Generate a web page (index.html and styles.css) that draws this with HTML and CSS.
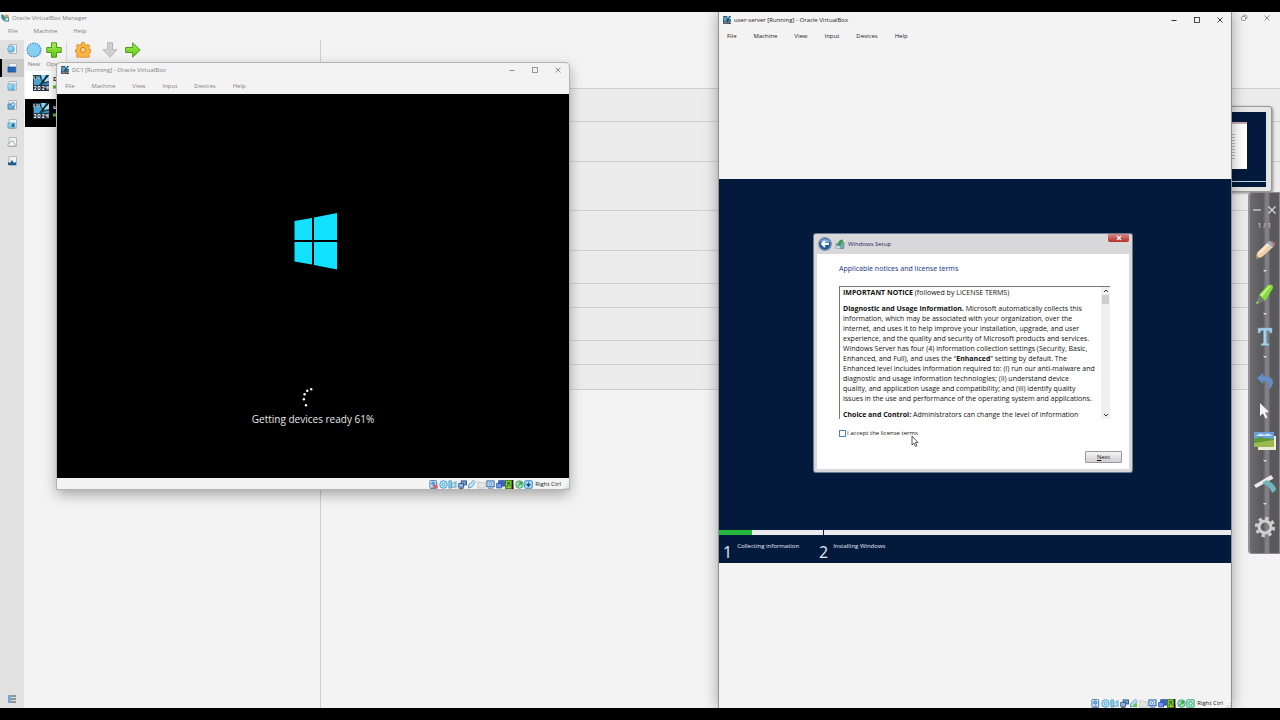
FILE: index.html
```html
<!DOCTYPE html>
<html lang="en">
<head>
<meta charset="utf-8">
<title>Oracle VirtualBox Manager</title>
<link rel="stylesheet" href="styles.css">
</head>
<body>
<svg class="defs" aria-hidden="true">
  <defs>
    <linearGradient id="blue" x1="0" y1="0" x2="1" y2="1"><stop offset="0" stop-color="#c8efff"/><stop offset="1" stop-color="#4aaee6"/></linearGradient>
    <linearGradient id="green" x1="0" y1="0" x2="0" y2="1"><stop offset="0" stop-color="#a6f04a"/><stop offset="1" stop-color="#5cc416"/></linearGradient>
    <symbol id="server" viewBox="0 0 16 16">
      <rect width="16" height="16" fill="#1d3d50"/><path d="M1 4l6-1 2 3-3 4H1z" fill="#4ba3cf"/><path d="M8 0h5l-2 4-2 1z" fill="#8fd3f2"/><path d="M14 1h2v5l-5 1z" fill="#b9e2f2"/><path d="M10 9l6-2v3H9z" fill="#3c8cc0"/>
      <path d="M1 1v3h1M4 1v3M6 1v3" stroke="#e8f2f6" fill="none" stroke-width=".9"/><path d="M9 7l6-6" stroke="#122632" stroke-width="1.200"/><path d="M0 11h16v5H0z" fill="#2a333e"/>
      <path d="M1 11.500h2v1.500l-2 1.500h2.300M5 11.500h2v3H5zM9 11.500h2v1.500l-2 1.500h2.300M13 11v2h2v-2 4" stroke="#dfe8f4" fill="none" stroke-width=".9"/>
    </symbol>
    <symbol id="s-disk" viewBox="0 0 10 10"><rect x="1" y=".5" width="7.500" height="9" rx="1" fill="#d9efff" stroke="#3d6fa8"/><circle cx="4.800" cy="4" r="2" fill="#5caee8" stroke="#2f64a8" stroke-width=".6"/><path d="M2.500 8h5" stroke="#4b7cb4"/></symbol>
    <symbol id="s-cd" viewBox="0 0 10 10"><circle cx="5" cy="5" r="4.200" fill="#aee3f8" stroke="#3d98c8"/><circle cx="5" cy="5" r="1.300" fill="#fff" stroke="#2a6fa8" stroke-width=".7"/></symbol>
    <symbol id="s-audio" viewBox="0 0 10 10"><path d="M1 1h3v8H1z" fill="#8fd0ec" stroke="#3f8cb4" stroke-width=".8"/><path d="M4 5l4-3v6H4z" fill="#c6e9f8" stroke="#3f8cb4" stroke-width=".8"/><path d="M9 1v8" stroke="#6fb6d4"/></symbol>
    <symbol id="s-net" viewBox="0 0 10 10"><rect x="3.500" y="1" width="6" height="4.500" fill="#6d9fd6" stroke="#2c4678" stroke-width=".9"/><rect x=".8" y="4" width="5.500" height="4" fill="#90c0ee" stroke="#2c4678" stroke-width=".9"/><path d="M1 9.500h5" stroke="#555"/></symbol>
    <symbol id="s-usb" viewBox="0 0 10 10"><path d="M1.500 9l.5-4 4-3.500 2.500 2.500L5 8z" fill="#bce6fa" stroke="#4a90b8" stroke-width=".9"/><path d="M6 1l2-.5 1 1-.5 2" fill="#fff" stroke="#5580a0" stroke-width=".7"/></symbol>
    <symbol id="s-share" viewBox="0 0 10 10"><path d="M.8 2h3l1 1h4.500v6H.8z" fill="#e4e4e4" stroke="#bdbdbd" stroke-width=".8"/></symbol>
    <symbol id="s-screen" viewBox="0 0 10 10"><rect x="1" y="1" width="8" height="6.500" fill="#b5dcfa" stroke="#2f5fa0"/><circle cx="5" cy="4.200" r="1.400" fill="#fff" stroke="#3d6fa8" stroke-width=".8"/><path d="M2 9h6" stroke="#4a70a8"/></symbol>
    <symbol id="s-rec" viewBox="0 0 10 10"><rect x="3" y=".8" width="6.500" height="6" fill="#3a65d0" stroke="#203c90" stroke-width=".8"/><rect x=".8" y="4" width="5.500" height="4.800" fill="#6f9bea" stroke="#2a4aa0" stroke-width=".8"/></symbol>
    <symbol id="s-cpu" viewBox="0 0 10 10"><rect x=".5" y=".5" width="7" height="9" fill="#84cf32" stroke="#3c7a14"/><path d="M2 8l2-5 2 4M2 3h4" stroke="#275c10" fill="none"/><path d="M8.500 0v10" stroke="#171717" stroke-width="1.600"/><path d="M9.600 6v4" stroke="#d02020" stroke-width=".7"/></symbol>
    <symbol id="s-mouse" viewBox="0 0 10 10"><circle cx="5" cy="5" r="4.200" fill="#a8e6c0" stroke="#2c9a78"/><path d="M3 7l4-4M4 2.800h3v3" stroke="#3f9f3a" stroke-width="1.200" fill="none"/></symbol>
    <symbol id="s-key" viewBox="0 0 10 10"><rect x=".8" y=".8" width="8.400" height="8.400" rx="1" fill="#a2dcfa" stroke="#3a80b0"/><path d="M5 2v3M2.800 4.800h4.400L5 7.500z" fill="#12407c" stroke="#12407c" stroke-width=".8"/></symbol>
    <symbol id="s-keyg" viewBox="0 0 10 10"><rect x=".8" y=".8" width="8.400" height="8.400" rx="1" fill="#a9ecc9" stroke="#36a486"/><circle cx="5" cy="5" r="2" fill="#e8fff0" stroke="#2a9460"/></symbol>
    <symbol id="min" viewBox="0 0 8 8"><path d="M1.500 4.500h5" stroke="currentColor" stroke-width=".9"/></symbol>
    <symbol id="max" viewBox="0 0 8 8"><rect x="1.500" y="1.500" width="5" height="5" fill="none" stroke="currentColor" stroke-width=".8"/></symbol>
    <symbol id="close" viewBox="0 0 8 8"><path d="M1.500 1.500l5 5m0-5l-5 5" stroke="currentColor" stroke-width=".9"/></symbol>
    <symbol id="restore" viewBox="0 0 8 8"><rect x="1.500" y="2.500" width="4" height="4" rx="1" fill="none" stroke="currentColor" stroke-width=".8"/><path d="M3 1.200h2.500q1.300 0 1.300 1.300V5" fill="none" stroke="currentColor" stroke-width=".8"/></symbol>
    <symbol id="grip" viewBox="0 0 6 6"><path d="M5 1v1M3 3v1M5 3v1M1 5v1M3 5v1M5 5v1" stroke="#b8b8b8"/></symbol>
    <symbol id="page" viewBox="0 0 10 10"><path d="M2 .5h7.500v9H2z" fill="#eef3f6" stroke="#b4b8bc"/></symbol>
  </defs>
</svg>

<main class="manager">
  <header class="titlebar">
    <svg class="logo" viewBox="0 0 9 9"><path d="M.5 1l2.500.5L4 4l-.5 3.500L1 5z" fill="#2c9aa8" stroke="#1d5d70" stroke-width=".6"/><path d="M4.500 4h4v4h-4z" fill="#d7eef2" stroke="#227284" stroke-width=".9"/><path d="M5 1.300h3v2H5z" fill="#f4b878" stroke="#c87830" stroke-width=".7"/></svg>
    <span class="caption">Oracle VirtualBox Manager</span>
    <div class="controls"><button aria-label="Restore"><svg><use href="#restore"/></svg></button><button aria-label="Close"><svg><use href="#close"/></svg></button></div>
  </header>
  <nav class="menu"><button>File</button><button>Machine</button><button>Help</button></nav>
  <div class="workspace">
    <nav class="rail">
      <div class="tools">
        <button aria-label="Welcome"><svg viewBox="0 0 10 10"><use href="#page"/><circle cx="4" cy="5" r="3.300" fill="url(#blue)" stroke="#4b9cc8" stroke-width=".8"/></svg></button>
        <button class="current" aria-label="Machines"><svg viewBox="0 0 10 10"><use href="#page"/><rect x="1" y="4" width="7.500" height="5" fill="#2468b8" stroke="#184c90" stroke-width=".7"/></svg></button>
        <button aria-label="Extensions"><svg viewBox="0 0 10 10"><use href="#page"/><path d="M1 3h6v6H1z" fill="url(#blue)" stroke="#5aa8cc" stroke-width=".8"/><path d="M8 2v7" stroke="#8cc8e0"/></svg></button>
        <button aria-label="Media"><svg viewBox="0 0 10 10"><use href="#page"/><path d="M1 4h6v5H1z" fill="#70b8e4" stroke="#3577a8" stroke-width=".8"/><circle cx="6" cy="4.500" r="2" fill="#b9e3f8" stroke="#3577a8" stroke-width=".7"/></svg></button>
        <button aria-label="Network"><svg viewBox="0 0 10 10"><use href="#page"/><path d="M1 4h7v5H1z" fill="#8cd0e8" stroke="#4aa0bc" stroke-width=".8"/><path d="M4 7l3-3v4z" fill="#17507a"/></svg></button>
        <button aria-label="Cloud"><svg viewBox="0 0 10 10"><use href="#page"/><path d="M1 9V7l2-1 1-2h2l1 2 1 1v2z" fill="#fff" stroke="#8a98a2" stroke-width=".8"/></svg></button>
        <button aria-label="Activities"><svg viewBox="0 0 10 10"><use href="#page"/><path d="M1 9V6l2 1 2-3 2 3 2-1v3z" fill="#1e5a94"/></svg></button>
      </div>
      <button class="log" aria-label="Logs"><svg viewBox="0 0 10 10"><path d="M1 1h3v8H1z" fill="#69aede"/><path d="M4 2h5M4 5h5M4 8h5" stroke="#444" stroke-width="1.200"/></svg></button>
    </nav>
    <section class="machines">
      <div class="toolbar">
        <button class="tool"><svg viewBox="0 0 16 16"><circle cx="8" cy="8" r="6.800" fill="url(#blue)" stroke="#3f94c4" stroke-width="1.500" stroke-dasharray="1.500 1"/><circle cx="8" cy="8" r="6" fill="#86d0f4"/></svg>New</button>
        <button class="tool"><svg viewBox="0 0 16 16"><path d="M5.500.8h5v4.700h4.700v5h-4.700v4.700h-5v-4.700H.8v-5h4.700z" fill="url(#green)" stroke="#4a9a1c"/></svg>Open</button>
        <span class="rule"></span>
        <button class="tool wide"><svg viewBox="0 0 16 16"><path d="M6.600.6h2.800l.4 2 1.500.7 1.800-1.100 1.700 1.700-1.100 1.800.7 1.500 1.400.4v2.800l-1.400.4-.7 1.500 1.100 1.800-1.700 1.700-1.800-1.100-1.500.7-.4 1.600H6.600l-.4-1.600-1.500-.7-1.800 1.100-1.700-1.700 1.100-1.800-.7-1.500-1-.4V7.600l1-.4.7-1.500-1.100-1.800 1.700-1.700 1.800 1.100 1.500-.7z" fill="#ffb440" stroke="#d5852a" stroke-width=".8"/><circle cx="8" cy="8" r="2.600" fill="#ffd48c" stroke="#c9822c"/></svg>Settings</button>
        <button class="tool wide"><svg viewBox="0 0 16 16"><path d="M5.500.7h5v7h4.500L8 15.200 1 7.700h4.500z" fill="#d5d5d5" stroke="#b5b5b5"/><path d="M8 2v10" stroke="#bcbcbc"/></svg>Discard</button>
        <button class="tool"><svg viewBox="0 0 16 16"><path d="M.7 5.500h7V.9l7.500 7.100-7.500 7.100v-4.600h-7z" fill="url(#green)" stroke="#4a9a1c"/></svg>Start</button>
      </div>
      <ul class="vms">
        <li><svg class="os"><use href="#server"/></svg><div><b>DC1</b><svg class="run" viewBox="0 0 8 8"><path d="M0 2.500h4V0l4 4-4 4V5.500H0z" fill="#55bd20"/></svg></div></li>
        <li class="selected"><svg class="os"><use href="#server"/></svg><div><b>user-server</b><svg class="run" viewBox="0 0 8 8"><path d="M0 2.500h4V0l4 4-4 4V5.500H0z" fill="#55bd20"/></svg></div></li>
      </ul>
    </section>
    <section class="details"><i class="r49"></i><i class="r33"></i><i class="r40"></i><i class="r49"></i><i class="r40"></i><i class="r33"></i><i class="r24"></i><i class="r33"></i><i class="r24"></i><i class="r25"></i></section>
  </div>
  <aside class="preview"><div class="shot"><div class="paper"><span></span></div></div></aside>
</main>

<section class="window dc1">
  <header class="titlebar"><svg class="logo"><use href="#server"/></svg><span class="caption">DC1 [Running] - Oracle VirtualBox</span>
    <div class="controls"><button aria-label="Minimize"><svg><use href="#min"/></svg></button><button aria-label="Maximize"><svg><use href="#max"/></svg></button><button aria-label="Close"><svg><use href="#close"/></svg></button></div></header>
  <nav class="menu"><button>File</button><button>Machine</button><button>View</button><button>Input</button><button>Devices</button><button>Help</button></nav>
  <div class="boot">
    <svg class="winlogo" viewBox="0 0 50 58"><path d="M6.500 9L24 6v22H6.500zM26 5.500L49 1v27H26zM6.500 30H24v22.500l-17.500-3zM26 30h23v27.500l-23-4.500z" fill="#12e2ff"/></svg>
    <svg class="spinner" viewBox="0 0 22 22"><g fill="#fff"><circle cx="9.200" cy="3.300" r="1.200"/><circle cx="5.300" cy="4.800" r="1.200"/><circle cx="2.600" cy="8.300" r="1.200"/><circle cx="1.900" cy="13.300" r="1.200"/><circle cx="4" cy="19.300" r="1.200"/></g></svg>
    <p>Getting devices ready 61%</p>
  </div>
  <footer class="status"><div class="lights"><svg viewBox="0 0 10 10"><use href="#s-disk"/><path d="M5 5.500h4.500v4H5z" fill="#e06058"/></svg><svg><use href="#s-cd"/></svg><svg><use href="#s-audio"/></svg><svg><use href="#s-net"/></svg><svg><use href="#s-usb"/></svg><svg><use href="#s-share"/></svg><svg><use href="#s-screen"/></svg><svg><use href="#s-rec"/></svg><svg><use href="#s-cpu"/></svg><svg><use href="#s-mouse"/></svg><svg><use href="#s-key"/></svg></div><span>Right Ctrl</span><svg class="grip"><use href="#grip"/></svg></footer>
</section>

<section class="window user">
  <header class="titlebar"><svg class="logo"><use href="#server"/></svg><span class="caption">user-server [Running] - Oracle VirtualBox</span>
    <div class="controls"><button aria-label="Minimize"><svg><use href="#min"/></svg></button><button aria-label="Maximize"><svg><use href="#max"/></svg></button><button aria-label="Close"><svg><use href="#close"/></svg></button></div></header>
  <nav class="menu"><button>File</button><button>Machine</button><button>View</button><button>Input</button><button>Devices</button><button>Help</button></nav>
  <div class="guest">
    <div class="setup">
      <form class="dialog">
        <header class="dialog-title">
          <svg class="back" viewBox="0 0 14 14"><circle cx="7" cy="7" r="6.300" fill="#245c96" stroke="#8096b0" stroke-width="1.200"/><path d="M2 5a5.500 5 0 0 1 10 0q-5 2-10 0z" fill="#84a8d0"/><path d="M11 7H4m3-3L4 7l3 3" fill="none" stroke="#fff" stroke-width="1.800"/></svg>
          <svg class="box" viewBox="0 0 10 10"><path d="M1 5l2-1 6-.5v6H1z" fill="#80a8b4" stroke="#5c7c88" stroke-width=".6"/><path d="M3 7V4l2-3 3-.5v3L6 4v3z" fill="#35a052"/><path d="M1 7h4v2.500H1z" fill="#bfe0dc"/></svg>
          <span>Windows Setup</span>
          <button type="button" class="red" aria-label="Close"><svg viewBox="0 0 8 6"><path d="M2 1l4 4m0-4L2 5" stroke="#fff" stroke-width="1.300"/></svg></button>
        </header>
        <div class="dialog-body">
          <h1>Applicable notices and license terms</h1>
          <div class="terms">
            <div class="copy">
              <p><b>IMPORTANT NOTICE</b> (followed by LICENSE TERMS)</p>
              <p><b>Diagnostic and Usage Information.</b> Microsoft automatically collects this<br>information, which may be associated with your organization, over the<br>internet, and uses it to help improve your installation, upgrade, and user<br>experience, and the quality and security of Microsoft products and services.<br>Windows Server has four (4) information collection settings (Security, Basic,<br>Enhanced, and Full), and uses the “<b>Enhanced</b>” setting by default. The<br>Enhanced level includes information required to: (i) run our anti-malware and<br>diagnostic and usage information technologies; (ii) understand device<br>quality, and application usage and compatibility; and (iii) identify quality<br>issues in the use and performance of the operating system and applications.</p>
              <p><b>Choice and Control:</b> Administrators can change the level of information</p>
            </div>
            <div class="scroll"><svg viewBox="0 0 8 8"><path d="M2 5l2-2 2 2" fill="none" stroke="#333"/></svg><i></i><svg class="down" viewBox="0 0 8 8"><path d="M2 3l2 2 2-2" fill="none" stroke="#333"/></svg></div>
          </div>
          <label class="accept"><input type="checkbox">I accept the license terms</label>
          <button type="button" class="next"><u>N</u>ext</button>
        </div>
      </form>
    </div>
    <div class="progress"><span class="step-one"><i></i></span><span class="step-two"></span></div>
    <ol class="steps"><li><b>1</b><span>Collecting information</span></li><li><b>2</b><span>Installing Windows</span></li></ol>
  </div>
  <footer class="status"><div class="lights"><svg><use href="#s-disk"/></svg><svg><use href="#s-cd"/></svg><svg><use href="#s-audio"/></svg><svg><use href="#s-net"/></svg><svg viewBox="0 0 10 10"><use href="#s-usb"/><path d="M5 5h4v4H5z" fill="#6cc63a"/></svg><svg><use href="#s-share"/></svg><svg><use href="#s-screen"/></svg><svg><use href="#s-rec"/></svg><svg><use href="#s-cpu"/></svg><svg><use href="#s-mouse"/></svg><svg><use href="#s-keyg"/></svg></div><span>Right Ctrl</span><svg class="grip"><use href="#grip"/></svg></footer>
</section>

<aside class="palette">
  <div class="palette-top"><button aria-label="Minimize"><svg viewBox="0 0 10 10"><path d="M1 5h8" stroke="currentColor" stroke-width="1.200"/></svg></button><button aria-label="Close"><svg viewBox="0 0 10 10"><path d="M1.500 1.500l7 7m0-7l-7 7" stroke="currentColor" stroke-width="1.200"/></svg></button></div>
  <span class="count">1 / 1</span>
  <button aria-label="Pencil"><svg viewBox="0 0 22 22"><path d="M2 19l1-6L13 3l6 4-11 10z" fill="#f1cfa4"/><path d="M4 12L14 3l2 1.500L6 14z" fill="#fae6c8"/><path d="M13 3l2-2q4 0 6 3l-2 3.500z" fill="#7bb4d8"/><path d="M16 1q4 0 5 4l-1.500 1z" fill="#e06668"/><path d="M2 19l1-3 2 2z" fill="#8a6848"/></svg></button><i class="caret"></i>
  <button aria-label="Highlighter"><svg viewBox="0 0 22 22"><path d="M5 12L14 2q5-2 5 3L11 18z" fill="#84dc3c"/><path d="M6 12l9-9 2 0-9 11z" fill="#bdf27c"/><path d="M5 12l6 6-8 3-1-1z" fill="#747c74"/><path d="M2 21l1-3 2 2z" fill="#9bdc60"/></svg></button><i class="caret"></i>
  <button aria-label="Text"><svg viewBox="0 0 22 22"><path d="M4 2h14v5h-2l-1-2.500h-2.500V17l2.500 1v1.500H7V18l2.500-1V4.500H7L6 7H4z" fill="#a6cfea" stroke="#739fc0" stroke-width=".5"/></svg></button><i class="caret"></i>
  <button aria-label="Undo" class="undo"><svg viewBox="0 0 22 22"><path d="M3 7l6-5 .5 3.500Q19 5 19 12q-1 5-5 6 3-9-4.500-8L9 13z" fill="#648fc6"/></svg></button>
  <button aria-label="Select" class="select"><svg viewBox="0 0 22 22"><path d="M6 3l9 9-4 .5 2.500 5-2 1-2.500-5L6 16z" fill="#f4f4f4"/></svg></button>
  <button aria-label="Image"><svg viewBox="0 0 22 22"><path d="M4 6h18v14H4z" fill="#ecebd8"/><path d="M0 2h20v15H0z" fill="#6b9fdc"/><path d="M0 9q5-3 10-1l10 1v8H0z" fill="#5b9a35"/><path d="M0 13l20-3v7H0z" fill="#9bb94e"/><path d="M2 6q5-4 8-1 5-3 8 1z" fill="#d6e6f7"/></svg></button><i class="caret"></i>
  <button aria-label="Eraser"><svg viewBox="0 0 22 22"><path d="M0 12L17 2l2.500 3.500L2 15z" fill="#ecebea"/><path d="M9 9l4-2q9 5 9 10l-4 3q-2-7-9-9z" fill="#70b6bd"/></svg></button><i class="caret"></i>
  <button aria-label="Settings"><svg viewBox="0 0 22 22"><circle cx="11" cy="11" r="6" fill="none" stroke="#cfcfcf" stroke-width="3.200"/><circle cx="11" cy="11" r="8.700" fill="none" stroke="#cfcfcf" stroke-width="3" stroke-dasharray="3.400 3.430"/></svg></button>
</aside>
<svg class="cursor" viewBox="0 0 8 13"><path d="M1 1v9l2-2 1.500 3.500 1.500-.7L4.500 7.500H7z" fill="#fff" stroke="#333" stroke-width=".8"/></svg>
</body>
</html>
```
FILE: styles.css
```css
* { box-sizing: border-box; }
body {
  margin: 0;
  height: 100vh;
  padding: 12px 0;
  background: #000;
  overflow: hidden;
  position: relative;
  font: 6px/10px "Open Sans", "Noto Sans", sans-serif;
  color: #222;
}
button { border: 0; padding: 0; background: none; font: inherit; color: inherit; }
svg { display: block; }
p, h1, ul, ol { margin: 0; padding: 0; list-style: none; }
.defs { position: absolute; width: 0; height: 0; }

.manager { position: relative; height: 100%; display: flex; flex-direction: column; background: #f3f3f3; color: #808080; }
.titlebar { display: flex; align-items: center; gap: 3px; height: 14px; padding: 0 4px; }
.logo { width: 8px; height: 8px; }
.controls { margin-left: auto; display: flex; gap: 15px; padding-right: 3px; }
.controls svg { width: 8px; height: 8px; }
.menu { display: flex; align-items: center; gap: 17px; height: 17px; padding-left: 8px; }
.manager .titlebar { height: 12px; padding-left: 1px; }
.manager .menu { height: 14px; margin-bottom: 2px; gap: 16px; flex: none; }
.manager .controls { padding-right: 5px; }
.workspace { flex: 1; display: flex; min-height: 0; }
.rail { width: 24px; display: flex; flex-direction: column; justify-content: space-between; background: #e1e1e1; }
.tools { display: flex; flex-direction: column; height: 130px; }
.tools button { flex: 1; display: flex; align-items: center; justify-content: center; border-left: 2px solid transparent; padding-right: 2px; }
.tools .current { border-color: #000; background: #c9c9c9; }
.rail svg { width: 10px; height: 10px; }
.log { display: flex; justify-content: center; padding-bottom: 4px; }
.machines { width: 297px; border-right: 1px solid #cfcfcf; }
.toolbar { display: flex; height: 31px; padding-top: 2px; }
.tool { width: 20px; display: flex; flex-direction: column; align-items: center; gap: 1px; }
.tool.wide { width: 27px; }
.tool svg { width: 16px; height: 16px; flex: none; }
.rule { width: 1px; height: 24px; margin: 0 2px; background: #d8d8d8; }
.vms { margin-left: 1px; }
.vms li { display: flex; gap: 4px; height: 28px; padding: 4px 8px; background: #fff; color: #222; }
.vms .selected { background: #000; color: #fff; }
.os { width: 16px; height: 16px; }
.vms div { line-height: 8px; }
.run { width: 8px; height: 8px; }
.details { flex: 1; display: flex; flex-direction: column; background: #f3f3f3; }
.details i { border-bottom: 1px solid #cfcfcf; background: #ececec; }
.details i:first-child { background: #f3f3f3; }
.r24 { height: 24px; }
.r25 { height: 25px; }
.r33 { height: 33px; }
.r40 { height: 40px; }
.r49 { height: 49px; }
.preview { position: absolute; right: 8px; top: 94px; width: 150px; height: 86px; padding: 5px; border: 1px solid #999; border-radius: 3px; background: #e6e6e6; box-shadow: 1px 1px 3px #888; }
.shot { height: 75px; display: flex; flex-direction: column; align-items: flex-end; padding: 10px 19px 5px 0; background: linear-gradient(#041a3d 69px, #c9d3df 69px, #c9d3df 70px, #041a3d 70px); }
.paper { width: 60px; height: 47px; padding: 10px 6px; background: #fff; border-top: 2px solid #cda9b7; }
.paper span { display: block; width: 42px; height: 26px; background: repeating-linear-gradient(#bbb 0 1px, #fff 1px 3px); }

.window { position: absolute; display: flex; flex-direction: column; background: #f3f3f3; }
.dc1 { left: 57px; top: 63px; width: 512px; border-radius: 4px 4px 0 0; color: #808080; box-shadow: 0 0 0 1px #b4b4b4, 0 5px 14px rgba(0,0,0,.35); }
.user { left: 719px; top: 12px; width: 512px; bottom: 12px; box-shadow: 0 0 0 1px #8f8f8f, 0 0 14px rgba(0,0,0,.4); clip-path: inset(0 -30px 0 -30px); }
.user .titlebar { height: 16px; }
.user .menu { height: 15px; }
.boot { height: 384px; padding-top: 118px; display: flex; flex-direction: column; align-items: center; background: #000; color: #e8e8e8; }
.winlogo { width: 50px; height: 58px; flex: none; }
.spinner { width: 22px; height: 22px; margin: 116px 0 2px; flex: none; }
.boot p { font-size: 10px; line-height: 18px; }
.status { display: flex; align-items: center; justify-content: flex-end; gap: 2px; height: 11px; padding-top: 1px; color: #222; }
.lights { display: flex; justify-content: space-between; width: 104px; }
.lights svg { width: 9px; height: 9px; }
.grip { width: 6px; height: 6px; align-self: flex-end; }
.user .status { margin-top: auto; }

.guest { margin-top: 136px; height: 384px; display: flex; flex-direction: column; background: #041a3d; }
.setup { height: 351px; padding: 55px 0 0 95px; }
.dialog { width: 318px; padding: 0 3px 3px; border-radius: 2px; background: #d8d8da; color: #111; box-shadow: 0 0 0 1px #6c7a90; }
.dialog-title { display: flex; align-items: center; height: 20px; padding: 0 0 1px 1px; gap: 3px; color: #2b2460; }
.back { width: 14px; height: 14px; }
.box { width: 10px; height: 10px; }
.red { align-self: flex-start; margin-left: auto; width: 21px; height: 8px; display: flex; justify-content: center; align-items: center; border-radius: 0 0 2px 2px; background: linear-gradient(#d98a88, #b62a28); }
.red svg { width: 8px; height: 6px; }
.dialog-body { height: 215px; padding: 9px 7px 6px 22px; display: flex; flex-direction: column; align-items: flex-start; background: #fff; }
h1 { font: 400 7px/12px "Noto Sans", sans-serif; color: #2a3c8c; }
.terms { width: 271px; height: 136px; margin-top: 11px; display: flex; overflow: hidden; border-left: 1px solid #777; border-top: 1px solid #777; }
.copy { flex: 1; padding: 1px 0 0 3px; white-space: nowrap; font-size: 7px; }
.copy p { margin-bottom: 6px; }
.scroll { width: 9px; display: flex; flex-direction: column; align-items: center; background: #f0f0f0; }
.scroll svg { width: 8px; height: 8px; }
.scroll i { width: 7px; height: 9px; background: #cdcdcd; }
.scroll .down { margin-top: auto; }
.accept { display: flex; align-items: center; gap: 1px; margin-top: 8px; height: 12px; }
.accept input { appearance: none; width: 7px; height: 7px; margin: 0; border: 1px solid #4a88b8; background: #fff; }
.next { align-self: flex-end; margin-top: 12px; width: 37px; height: 12px; line-height: 10px; border: 1px solid #9a9a9a; border-radius: 1px; background: linear-gradient(#f4f4f4, #d0d0d4); }
.progress { display: flex; gap: 1px; height: 6px; padding-bottom: 1px; }
.step-one { width: 104px; background: #e8eaee; }
.step-one i { display: block; width: 33px; height: 5px; background: #22b83c; }
.step-two { flex: 1; background: #e8eaee; }
.steps { display: flex; color: #e4ebf5; }
.steps li { display: flex; gap: 5px; width: 96px; padding: 5px 0 0 4px; }
.steps b { font-size: 16px; line-height: 22px; font-weight: 400; }

.palette { position: absolute; right: 0; top: 192px; width: 32px; height: 362px; padding: 12px 2px 0; display: flex; flex-direction: column; align-items: center; border: 1px solid #8c8790; border-left: 2px solid #989298; border-radius: 4px 0 0 4px; background: linear-gradient(90deg, #6c6b6e, #5a5a5c 45%, #858087 55%, #858087 63%, #5a5a5c 70%); color: #ddd; }
.palette-top { display: flex; gap: 5px; }
.palette-top svg { width: 10px; height: 10px; }
.count { font-size: 7px; line-height: 12px; margin: 5px 0 8px; }
.palette > button svg { width: 22px; height: 22px; }
.caret { width: 0; height: 0; flex: none; border: 2px solid transparent; border-top-color: #ddd; margin: 8px 0 9px; }
.palette .undo { margin-top: 2px; }
.palette .select { margin: 7px 0 8px; }
.cursor { position: absolute; left: 911px; top: 435px; width: 8px; height: 13px; }
```
